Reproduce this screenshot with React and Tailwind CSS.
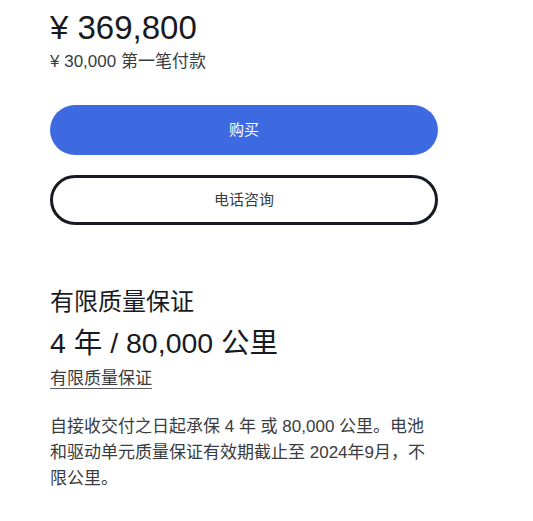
import React from 'react';

export default function App() {
  return (
    <div
      className="w-[533px] h-[521px] bg-white overflow-hidden"
      style={{ fontFamily: '"Liberation Sans", "Noto Sans CJK SC", sans-serif' }}
    >
      <div className="w-[388px] ml-[50px] pt-[6px]">
        <div className="text-[33px] leading-[44px] text-[#171a20]">¥ 369,800</div>
        <div className="mt-[1px] text-[17px] leading-[22px] text-[#393c41]">¥ 30,000 第一笔付款</div>

        <button className="mt-[32px] w-full h-[50px] rounded-full bg-[#3e6ae1] text-white text-[15px]">
          购买
        </button>
        <button className="mt-[20px] w-full h-[50px] rounded-full border-[3px] border-[#171a20] bg-white text-[#393c41] text-[15px]">
          电话咨询
        </button>

        <div className="mt-[62px] text-[24px] leading-[30px] text-[#171a20]">有限质量保证</div>
        <div className="mt-[8px] text-[28.5px] leading-[36px] text-[#171a20]">4 年 / 80,000 公里</div>
        <a className="block w-fit mt-[7px] text-[17px] leading-[22px] text-[#393c41] underline underline-offset-4 decoration-[#5c5e62]">
          有限质量保证
        </a>
        <p className="mt-[24px] text-[17px] leading-[26px] text-[#393c41]">
          自接收交付之日起承保 4 年 或 80,000 公里。电池和驱动单元质量保证有效期截止至 2024年9月，不限公里。
        </p>
      </div>
    </div>
  );
}
